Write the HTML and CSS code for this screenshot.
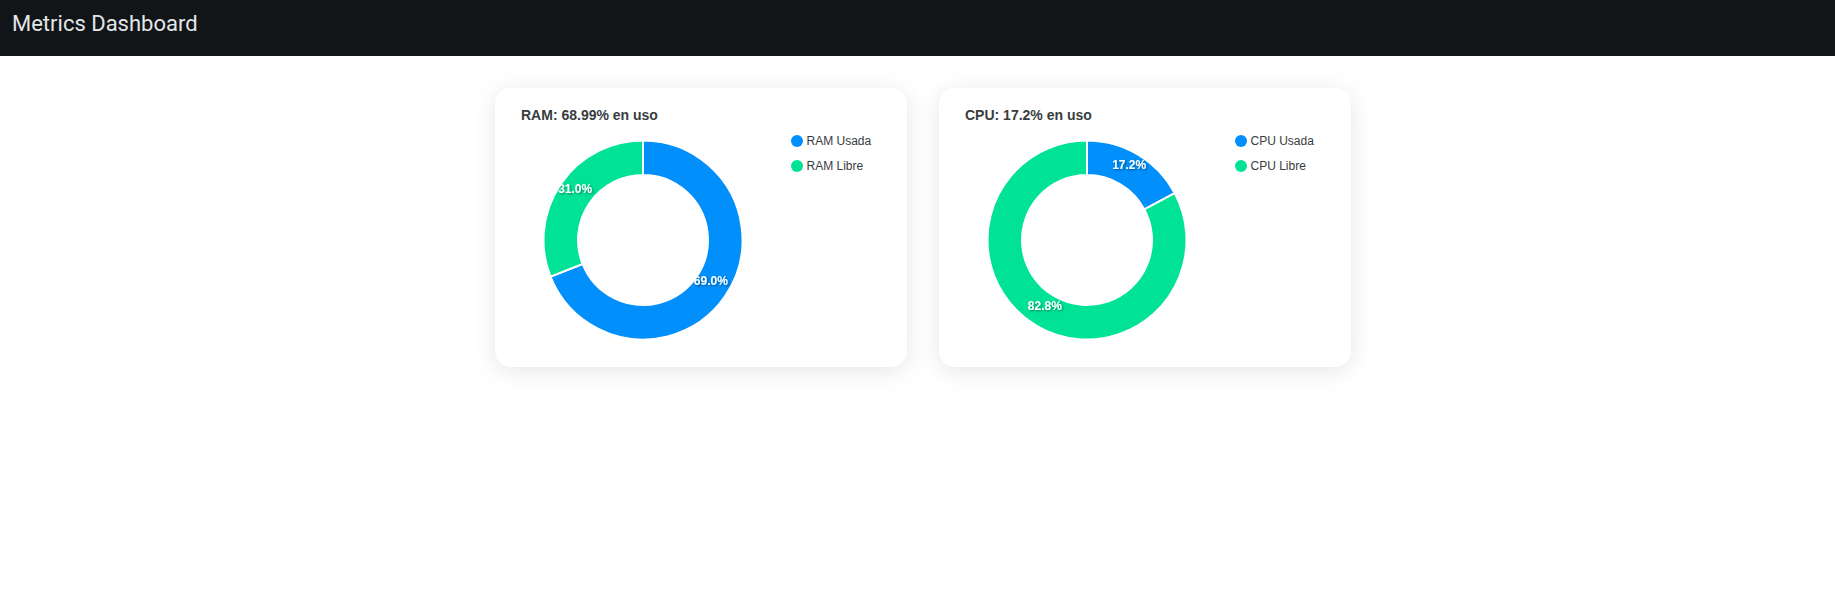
FILE: index.html
```html
<!DOCTYPE html>
<html lang="es">
<head>
<meta charset="utf-8">
<title>Metrics Dashboard</title>
<link rel="stylesheet" href="styles.css">
</head>
<body>
<header class="topbar">
  <h1 class="topbar-title">Metrics Dashboard</h1>
</header>
<main class="cards">
  <section class="card">
    <h2 class="card-title">RAM: 68.99% en uso</h2>
    <div class="chart-row">
      <svg class="donut" width="204" height="204" viewBox="0 0 204 204">
        <defs>
          <filter id="ds1" x="-20%" y="-20%" width="140%" height="160%">
            <feDropShadow dx="1" dy="1" stdDeviation="1" flood-color="#000" flood-opacity="0.45"/>
          </filter>
        </defs>
        <path class="slice-used" d="M102 2.5 A99.5 99.5 0 1 1 9.513 138.69 L41.581 125.968 A65 65 0 1 0 102 37 Z"/>
        <path class="slice-free" d="M9.513 138.69 A99.5 99.5 0 0 1 102 2.5 L102 37 A65 65 0 0 0 41.581 125.968 Z"/>
        <text class="slice-label" x="169.8" y="147.3" filter="url(#ds1)">69.0%</text>
        <text class="slice-label" x="34.2" y="55" filter="url(#ds1)">31.0%</text>
      </svg>
      <ul class="legend">
        <li class="legend-item"><span class="marker marker-used"></span>RAM Usada</li>
        <li class="legend-item"><span class="marker marker-free"></span>RAM Libre</li>
      </ul>
    </div>
  </section>
  <section class="card">
    <h2 class="card-title">CPU: 17.2% en uso</h2>
    <div class="chart-row">
      <svg class="donut" width="204" height="204" viewBox="0 0 204 204">
        <defs>
          <filter id="ds2" x="-20%" y="-20%" width="140%" height="160%">
            <feDropShadow dx="1" dy="1" stdDeviation="1" flood-color="#000" flood-opacity="0.45"/>
          </filter>
        </defs>
        <path class="slice-used" d="M102 2.5 A99.5 99.5 0 0 1 189.785 55.165 L159.347 71.404 A65 65 0 0 0 102 37 Z"/>
        <path class="slice-free" d="M189.785 55.165 A99.5 99.5 0 1 1 102 2.5 L102 37 A65 65 0 1 0 159.347 71.404 Z"/>
        <text class="slice-label" x="144.2" y="31.2" filter="url(#ds2)">17.2%</text>
        <text class="slice-label" x="59.8" y="172" filter="url(#ds2)">82.8%</text>
      </svg>
      <ul class="legend">
        <li class="legend-item"><span class="marker marker-used"></span>CPU Usada</li>
        <li class="legend-item"><span class="marker marker-free"></span>CPU Libre</li>
      </ul>
    </div>
  </section>
</main>
</body>
</html>
```

FILE: styles.css
```css
* {
  box-sizing: border-box;
}

html, body {
  margin: 0;
  padding: 0;
  background: #ffffff;
}

body {
  font-family: "Liberation Sans", Arial, Helvetica, sans-serif;
}

.topbar {
  height: 56px;
  background: #111517;
  padding: 11px 12px 0;
}

.topbar-title {
  margin: 0;
  font-family: Roboto, "Liberation Sans", sans-serif;
  font-weight: 400;
  font-size: 22px;
  line-height: 26px;
  color: #e2e6e9;
}

.cards {
  display: flex;
  justify-content: center;
  gap: 32px;
  padding: 32px 0 40px 11px;
}

.card {
  width: 412px;
  height: 279px;
  background: #ffffff;
  border-radius: 16px;
  box-shadow: 0 4px 24px rgba(0, 0, 0, 0.1);
  padding: 19px 26px 0;
}

.card-title {
  margin: 0;
  font-size: 14px;
  line-height: 16px;
  font-weight: 700;
  color: #373d3f;
}

.chart-row {
  display: flex;
  align-items: flex-start;
  margin-top: 12px;
}

.donut {
  display: block;
  margin: 2.5px 0 0 20px;
  overflow: visible;
}

.slice-used {
  fill: #008ffb;
  stroke: #ffffff;
  stroke-width: 2;
}

.slice-free {
  fill: #00e396;
  stroke: #ffffff;
  stroke-width: 2;
}

.slice-label {
  fill: #ffffff;
  font-family: "Liberation Sans", Arial, Helvetica, sans-serif;
  font-size: 12px;
  font-weight: 700;
  text-anchor: middle;
}

.legend {
  list-style: none;
  margin: 0 0 0 46px;
  padding: 0;
  display: flex;
  flex-direction: column;
  gap: 13px;
}

.legend-item {
  display: flex;
  align-items: center;
  height: 12px;
  font-size: 12px;
  color: #373d3f;
  white-space: nowrap;
}

.marker {
  width: 12px;
  height: 12px;
  border-radius: 50%;
  margin-right: 3.5px;
  flex: none;
}

.marker-used {
  background: #008ffb;
}

.marker-free {
  background: #00e396;
}
```
